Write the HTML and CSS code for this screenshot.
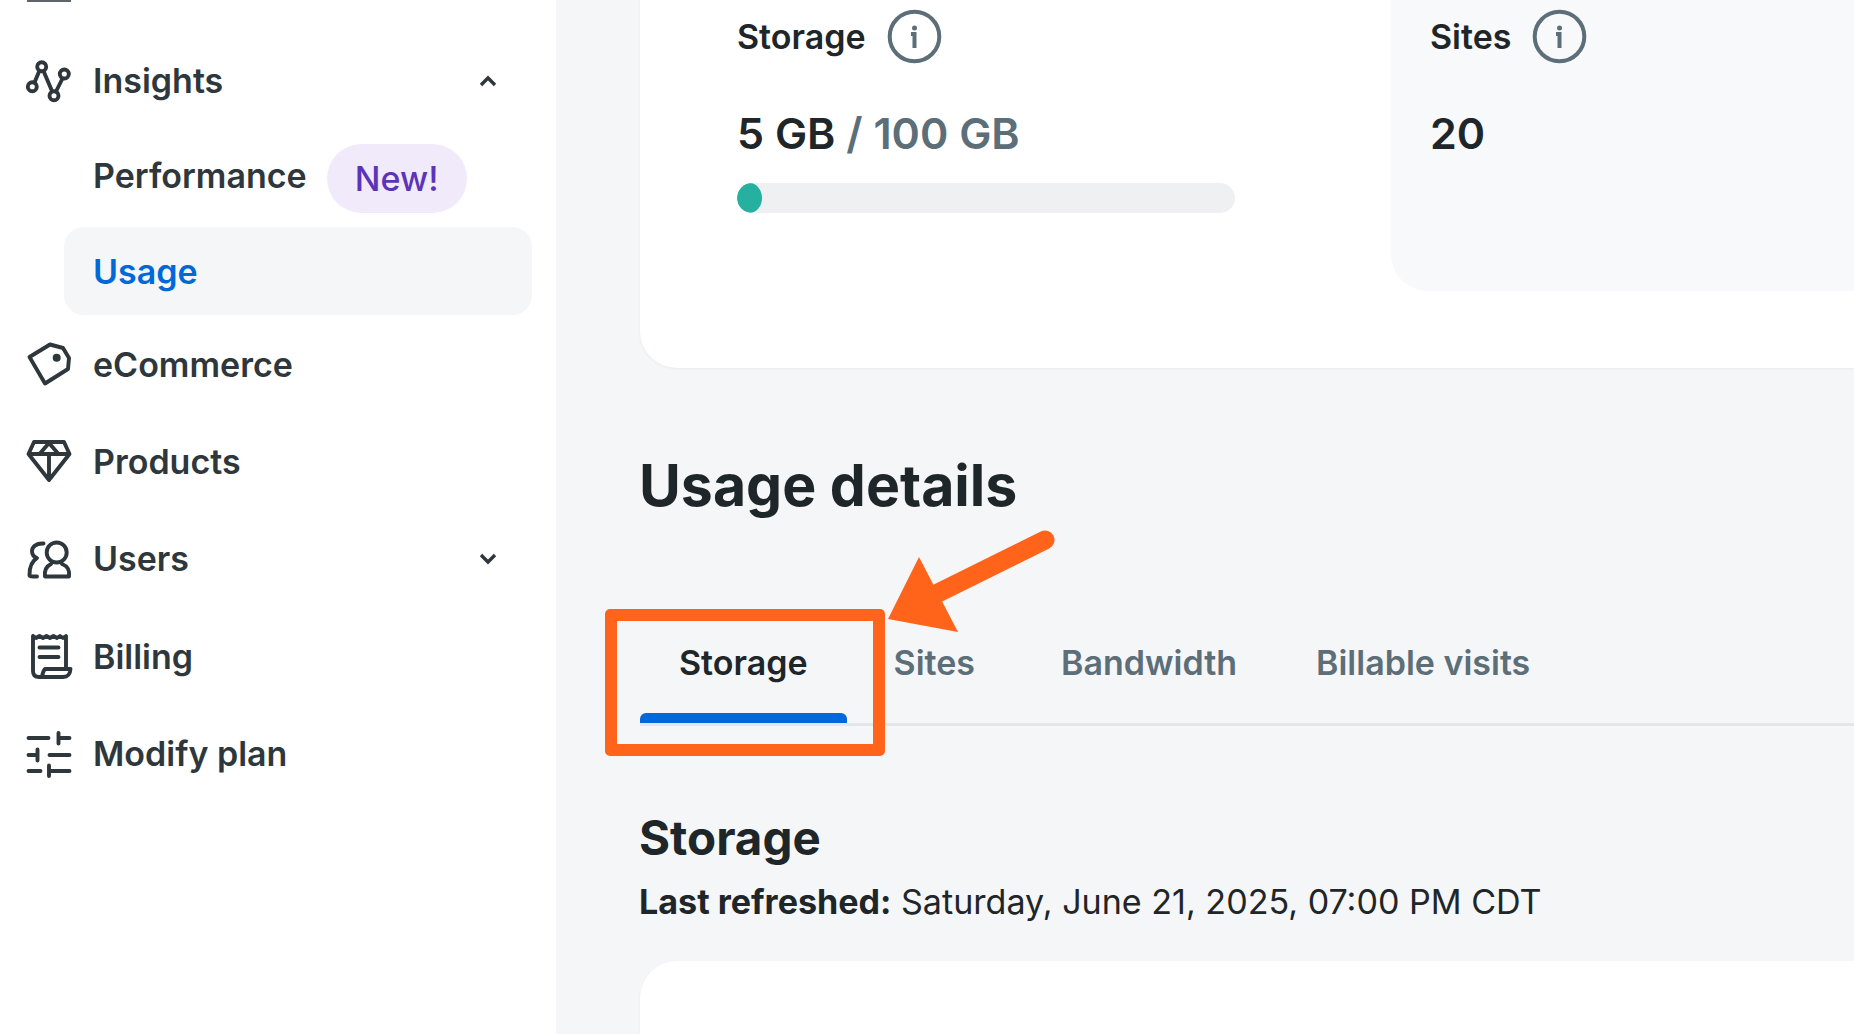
FILE: index.html
```html
<!DOCTYPE html>
<html lang="en">
<head>
    <meta charset="UTF-8">
    <title>Usage details</title>
    <link rel="stylesheet" href="styles.css">
</head>
<body>
    <aside class="sidebar">
        <div class="sliver"></div>
        <nav class="nav">
            <a class="nav-item">
                <svg class="nav-icon" viewBox="0 0 44 44"><path d="M12.500 11.500 7.500 23.500M16.500 12 25 32M29 32.500 35.500 19.500"/><circle cx="14.700" cy="7.700" r="4.500"/><circle cx="37.300" cy="15" r="4.500"/><circle cx="5.300" cy="27.700" r="4.500"/><circle cx="27" cy="36.700" r="4.500"/></svg>
                <span class="nav-label">Insights</span>
                <svg class="chevron" viewBox="0 0 16 10"><path d="M1 9 8 2l7 7"/></svg>
            </a>
            <div class="sub-list">
                <a class="sub-item">Performance <span class="pill">New!</span></a>
                <a class="sub-item active">Usage</a>
            </div>
            <a class="nav-item">
                <svg class="nav-icon" viewBox="0 0 44 44"><path d="M2.500 15 23 2.500 36 6 42 16 41 27 18 41.500Z"/><circle class="dot" cx="29.700" cy="15.700" r="4"/></svg>
                <span class="nav-label">eCommerce</span>
            </a>
            <a class="nav-item">
                <svg class="nav-icon" viewBox="0 0 44 44"><path d="M7 3H37L42.500 15 22 41 1.500 15ZM1.500 15H42.500M12.500 15 22 4 31.500 15M22 15V40"/></svg>
                <span class="nav-label">Products</span>
            </a>
            <a class="nav-item">
                <svg class="nav-icon" viewBox="0 0 44 44"><circle cx="29.700" cy="15.500" r="10"/><path d="M24 27C20 29 17 32 18 39.500H42C43 32 40 29 35 27M16.500 6.500C9 6 5 10 5 14 5 18 7 20 10 21 5 24 2.500 31 2.500 38 2.500 39.500 4 39.500 10 39.500"/></svg>
                <span class="nav-label">Users</span>
                <svg class="chevron" viewBox="0 0 16 10"><path d="M1 1 8 8l7-7"/></svg>
            </a>
            <a class="nav-item">
                <svg class="nav-icon" viewBox="0 0 44 44"><path d="M6 2 9 4 12.500 2 16 4 19.500 2 23 4 26.500 2 30 4 33 2 36 4 39 2V35M6 2V37Q6 43 12 43H36Q43 43 43.500 35H18Q16 37 15 43M12.500 13.500H31.500M12.500 23H31.500"/></svg>
                <span class="nav-label">Billing</span>
            </a>
            <a class="nav-item">
                <svg class="nav-icon" viewBox="0 0 44 44"><path d="M1.500 6H21.500M31.500 1V11.500M31.500 6H42.500M1.500 23H10.500M10.500 17.500V28.500M22.500 23H42.500M1.500 39H13.500M22 33.500V44M22 39H42.500"/></svg>
                <span class="nav-label">Modify plan</span>
            </a>
        </nav>
    </aside>

    <main class="main">
        <section class="card top-card">
            <div class="stat storage-stat">
                <div class="stat-title">Storage
                    <svg class="info" viewBox="0 0 53 53"><circle cx="26.500" cy="26.500" r="24.800"/><path d="M23 24H26.500V38"/><circle class="dot" cx="26.500" cy="18" r="2.500"/></svg>
                </div>
                <div class="stat-value">5 GB <span class="muted">/ 100 GB</span></div>
                <div class="bar"><div class="bar-fill" style="width: 5%"></div></div>
            </div>
            <div class="stat sites-stat">
                <div class="stat-title">Sites
                    <svg class="info" viewBox="0 0 53 53"><circle cx="26.500" cy="26.500" r="24.800"/><path d="M23 24H26.500V38"/><circle class="dot" cx="26.500" cy="18" r="2.500"/></svg>
                </div>
                <div class="stat-value">20</div>
            </div>
        </section>

        <h1 class="page-title">Usage details</h1>

        <div class="tabs">
            <a class="tab active">Storage</a>
            <a class="tab">Sites</a>
            <a class="tab">Bandwidth</a>
            <a class="tab">Billable visits</a>
        </div>

        <h2 class="section-title">Storage</h2>
        <p class="refreshed"><strong>Last refreshed:</strong> Saturday, June 21, 2025, 07:00 PM CDT</p>

        <section class="card bottom-card"></section>
    </main>

    <!-- annotation on top of the screenshot -->
    <div class="callout-box"></div>
    <svg class="callout-arrow" viewBox="0 0 170 100"><path class="shaft" d="M53 54 160 1"/><path class="head" d="M3 80 34 18 73 93Z"/></svg>
</body>
</html>
```

FILE: styles.css
```css
* {
    box-sizing: border-box;
}
body {
    font-family: Inter, "Noto Sans", sans-serif;
    background-color: #f5f6f8;
    color: #1f2629;
    display: flex;
    margin: 0;
    height: 1034px;
    overflow: hidden;
}
.sidebar {
    width: 556px;
    flex-shrink: 0;
    background-color: #fff;
}
.sliver {
    width: 44px;
    height: 2px;
    margin-left: 27px;
    background-color: #5f6569;
}
.nav {
    padding-top: 30px;
}
.nav-item {
    display: flex;
    align-items: center;
    height: 97.4px;
    padding-left: 27px;
    color: #2e373c;
    font-size: 34px;
    font-weight: 600;
}
.nav-icon {
    width: 44px;
    height: 44px;
    margin-right: 22px;
    fill: none;
    stroke: #2e373c;
    stroke-width: 3.9;
    stroke-linecap: round;
    stroke-linejoin: round;
    overflow: visible;
}
.nav-icon .dot {
    fill: #2e373c;
    stroke: none;
}
.nav-label {
    flex: 1;
}
.chevron {
    width: 16px;
    height: 10px;
    margin-right: 60px;
    fill: none;
    stroke: #2e373c;
    stroke-width: 3.4;
    overflow: visible;
}
.sub-list {
    display: flex;
    flex-direction: column;
    gap: 8px;
    margin: 2px 24px 0 64px;
}
.sub-item {
    display: flex;
    align-items: center;
    gap: 20px;
    height: 88px;
    padding-left: 29px;
    border-radius: 20px;
    color: #2e373c;
    font-size: 34px;
    font-weight: 600;
}
.sub-item.active {
    background-color: #f5f6f8;
    color: #0068d9;
}
.pill {
    display: flex;
    align-items: center;
    justify-content: center;
    width: 140px;
    height: 69px;
    margin-top: 6px;
    border-radius: 35px;
    background-color: #f1eafb;
    color: #5b34b8;
    font-size: 34px;
    font-weight: 500;
}
.main {
    flex: 1;
    min-width: 0;
    padding-left: 84px;
}
.card {
    background-color: #fff;
    box-shadow: 0 1px 3px rgba(0, 0, 0, 0.05);
}
.top-card {
    display: flex;
    height: 368px;
    border-bottom-left-radius: 37px;
}
.stat-title {
    display: flex;
    align-items: center;
    gap: 22px;
    height: 53px;
    margin-top: 10px;
    font-size: 34px;
    font-weight: 600;
}
.info {
    width: 53px;
    height: 53px;
    fill: none;
    stroke: #5c6e78;
    stroke-width: 4;
    overflow: visible;
}
.info .dot {
    fill: #5c6e78;
    stroke: none;
}
.stat-value {
    margin-top: 44px;
    font-size: 43px;
    line-height: 52px;
    font-weight: 600;
}
.muted {
    color: #5c6e78;
}
.storage-stat {
    width: 751px;
    padding-left: 97px;
}
.sites-stat {
    flex: 1;
    height: 291px;
    padding-left: 39px;
    background-color: #f8f9fb;
    border-bottom-left-radius: 37px;
}
.bar {
    width: 498px;
    height: 30px;
    margin-top: 24px;
    border-radius: 15px;
    background-color: #eef0f2;
    overflow: hidden;
}
.bar-fill {
    height: 100%;
    border-radius: 50%;
    background-color: #26b0a0;
}
.page-title {
    margin: 84px 0 0 -1px;
    font-size: 57.2px;
    line-height: 68px;
    font-weight: 700;
}
.tabs {
    display: flex;
    gap: 8px;
    height: 117px;
    margin-top: 89px;
    border-bottom: 3px solid #e4e6e9;
}
.tab {
    position: relative;
    display: flex;
    align-items: center;
    height: 114px;
    padding: 0 39px 8px;
    color: #5c6e78;
    font-size: 34px;
    font-weight: 600;
}
.tab:last-child {
    margin-left: -7px;
}
.tab.active {
    color: #1f2629;
}
.tab.active::after {
    content: "";
    position: absolute;
    left: 0;
    right: 0;
    bottom: 0;
    height: 10px;
    border-radius: 6px 6px 0 0;
    background-color: #0068d9;
}
.section-title {
    margin: 0 0 0 -1px;
    padding-top: 84px;
    font-size: 47.5px;
    line-height: 56px;
    font-weight: 700;
}
.refreshed {
    margin: 14px 0 0 -1px;
    font-size: 34.1px;
    line-height: 44px;
}
.bottom-card {
    height: 74px;
    margin-top: 37px;
    border-top-left-radius: 37px;
}
.callout-box {
    position: absolute;
    left: 605px;
    top: 609px;
    width: 280px;
    height: 147px;
    border: 12px solid #ff641a;
    border-radius: 5px;
}
.callout-arrow {
    position: absolute;
    left: 885px;
    top: 539px;
    width: 170px;
    height: 100px;
    overflow: visible;
}
.shaft {
    fill: none;
    stroke: #ff641a;
    stroke-width: 19;
    stroke-linecap: round;
}
.head {
    fill: #ff641a;
}
```
